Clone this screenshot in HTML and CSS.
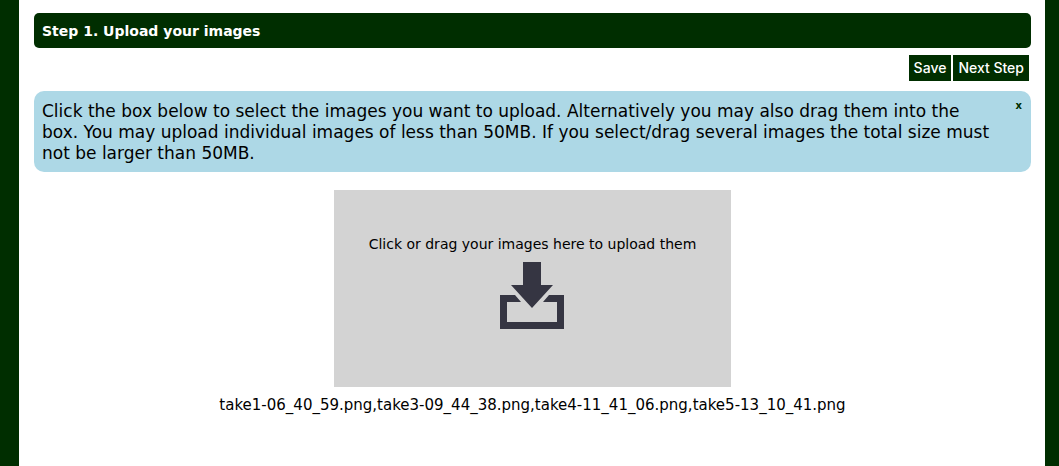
FILE: index.html
```html
<!DOCTYPE html>
<html lang="en">
<head>
<meta charset="utf-8">
<title>Upload your images</title>
<link rel="stylesheet" href="styles.css">
</head>
<body>
<main class="page">
  <h1 class="step-title">Step 1. Upload your images</h1>
  <div class="actions">
    <button class="action" type="button">Save</button>
    <button class="action" type="button">Next Step</button>
  </div>
  <section class="notice">
    <button class="notice-close" type="button" aria-label="Close">x</button>
    <p class="notice-text">Click the box below to select the images you want to upload. Alternatively you may also drag them into the box. You may upload individual images of less than 50MB. If you select/drag several images the total size must not be larger than 50MB.</p>
  </section>
  <button class="dropzone" type="button">
    <span>Click or drag your images here to upload them</span>
    <svg class="dropzone-icon" width="64" height="68" viewBox="0 0 64 68" aria-hidden="true">
      <path fill="#353542" d="M23 0h18v23h12L32 46 11 23h12z"/>
      <path fill="#353542" d="M0 33h15l6 7H7v20h50V40H43l6-7h15v34H0z"/>
    </svg>
  </button>
  <p class="files">take1-06_40_59.png,take3-09_44_38.png,take4-11_41_06.png,take5-13_10_41.png</p>
</main>
</body>
</html>
```
FILE: styles.css
```css
* { box-sizing: border-box; }
body {
  margin: 0;
  background: #002e00;
  color: #000;
  font-family: Verdana, "DejaVu Sans", sans-serif;
}
.page {
  display: flex;
  flex-direction: column;
  min-height: 100vh;
  margin: 0 14px 0 19px;
  padding: 13px 14px 24px 15px;
  background: #fff;
}
.step-title {
  margin: 0;
  padding: 9px 8px 7px;
  border-radius: 5px;
  background: #002e00;
  color: #fff;
  font-size: 14px;
  line-height: 19px;
}
.actions {
  display: flex;
  justify-content: flex-end;
  gap: 2px;
  padding: 7px 2px 10px;
}
.action {
  padding: 4px 5px;
  border: 0;
  background: #002e00;
  color: #fff;
  font: 500 14px/18px Inter, sans-serif;
}
.notice {
  padding: 10px 8px 8px;
  border-radius: 10px;
  background: #add8e6;
}
.notice-close {
  float: right;
  margin-left: 24px;
  padding: 0 1px;
  border: 0;
  background: none;
  color: #002e00;
  font: bold 10px/10px Verdana, "DejaVu Sans", sans-serif;
}
.notice-text {
  margin: 0;
  padding-right: 8px;
  font-size: 17px;
  line-height: 21px;
}
.dropzone {
  display: flex;
  flex-direction: column;
  align-items: center;
  align-self: center;
  gap: 8px;
  margin-top: 18px;
  padding: 45px 35px 57px;
  border: 0;
  background: #d3d3d3;
  color: #000;
  font: 14px/19px Verdana, "DejaVu Sans", sans-serif;
}
.files {
  margin: 9px 0 0;
  font-size: 15px;
  line-height: 18px;
  text-align: center;
}
```
